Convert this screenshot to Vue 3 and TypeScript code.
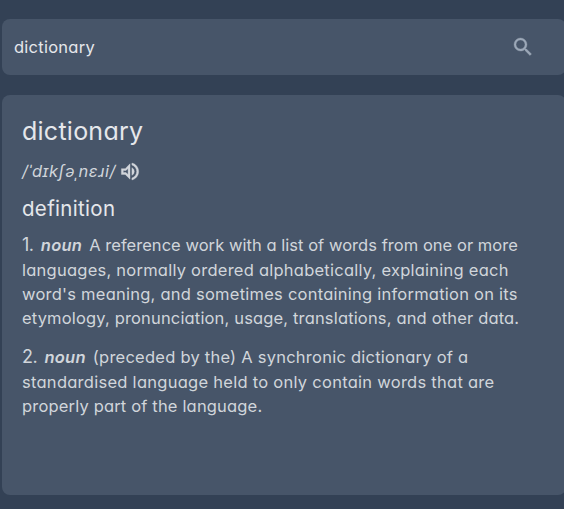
<script setup lang="ts">
import { ref } from 'vue'

interface Sense {
  id: number
  part: string
  lines: string[]
}

const query = ref('dictionary')
const word = 'dictionary'

const senses: Sense[] = [
  {
    id: 1,
    part: 'noun',
    lines: [
      'A reference work with a list of words from one or more',
      'languages, normally ordered alphabetically, explaining each',
      "word's meaning, and sometimes containing information on its",
      'etymology, pronunciation, usage, translations, and other data.',
    ],
  },
  {
    id: 2,
    part: 'noun',
    lines: [
      '(preceded by the) A synchronic dictionary of a',
      'standardised language held to only contain words that are',
      'properly part of the language.',
    ],
  },
]
</script>

<template>
  <main class="page">
    <form class="search" @submit.prevent>
      <input v-model="query" class="field" type="text" spellcheck="false" />
      <button class="icon-button" type="submit">
        <svg class="search-icon" viewBox="0 0 24 24">
          <path d="M15.5 14h-.79l-.28-.27A6.471 6.471 0 0 0 16 9.500 6.500 6.500 0 1 0 9.500 16c1.610 0 3.090-.59 4.230-1.570l.27.28v.79l5 4.990L20.490 19l-4.990-5zm-6 0C7.010 14 5 11.990 5 9.500S7.010 5 9.500 5 14 7.010 14 9.500 11.990 14 9.500 14z" />
        </svg>
      </button>
    </form>

    <article class="card">
      <h1 class="word"><span>{{ word }}</span></h1>
      <div class="phonetic">
        <span class="ipa">/ˈdɪkʃəˌnɛɹi/</span>
        <button class="icon-button" type="button">
          <svg class="speaker" viewBox="0 0 24 24">
            <path d="M3 9v6h4l5 5V4L7 9H3zm7-.17v6.340L7.830 13H5v-2h2.830L10 8.830zM16.500 12A4.500 4.500 0 0 0 14 7.970v8.050A4.470 4.470 0 0 0 16.500 12zM14 3.230v2.060c2.890.86 5 3.540 5 6.710s-2.110 5.850-5 6.710v2.060c4.010-.91 7-4.490 7-8.770s-2.990-7.860-7-8.770z" />
          </svg>
        </button>
      </div>
      <h2 class="heading"><span>definition</span></h2>
      <section v-for="sense in senses" :key="sense.id" class="sense" :class="`sense-${sense.id}`">
        <p v-for="(line, i) in sense.lines" :key="i" class="line" :class="`line-${i + 1}`">
          <template v-if="i === 0">
            <span class="number">{{ sense.id }}.</span>
            <em class="part">{{ sense.part }}</em>
          </template>
          <span class="text">{{ line }}</span>
        </p>
      </section>
    </article>
  </main>
</template>

<style>
body {
  margin: 0;
  overflow: hidden;
  background: #334155;
}
</style>

<style scoped>
.page {
  box-sizing: border-box;
  width: 566px;
  height: 509px;
  padding: 19px 0 14px 2px;
  display: flex;
  flex-direction: column;
  gap: 20px;
  background: #334155;
  color: #d1d5db;
  font-family: Inter, "Open Sans", sans-serif;
  font-feature-settings: "cv11";
}

.search {
  box-sizing: border-box;
  height: 56px;
  padding: 0 31px 0 12px;
  display: flex;
  align-items: center;
  border-radius: 8px;
  background: #475569;
}

.field {
  flex: 1;
  min-width: 0;
  padding: 0;
  border: 0;
  outline: 0;
  background: none;
  color: #e5e7eb;
  font: inherit;
  font-size: 16.5px;
  letter-spacing: 0.25px;
  font-feature-settings: "cv11";
}

.icon-button {
  display: flex;
  padding: 0;
  border: 0;
  background: none;
  color: inherit;
}

.search-icon {
  width: 24px;
  height: 24px;
  fill: #9ca8b8;
  stroke: #9ca8b8;
  stroke-width: 0.35;
}

.card {
  box-sizing: border-box;
  flex: 1;
  padding: 18px 20px;
  border-radius: 8px;
  background: #475569;
  white-space: nowrap;
}

.word,
.heading,
.line {
  margin: 0;
  font-weight: 400;
}

.word {
  height: 36px;
  line-height: 36px;
  font-size: 25px;
  letter-spacing: 0.25px;
  color: #e5e7eb;
}

.phonetic {
  height: 32px;
  margin-top: 6px;
  display: flex;
  align-items: center;
  gap: 2px;
}

.ipa {
  font-size: 16.5px;
  letter-spacing: 0.52px;
  font-style: italic;
}

.speaker {
  width: 24px;
  height: 23px;
  fill: #d1d5db;
  stroke: #d1d5db;
  stroke-width: 0.4;
}

.heading {
  margin-top: 7px;
  height: 30px;
  line-height: 30px;
  font-size: 20.5px;
  letter-spacing: 0.32px;
  color: #e5e7eb;
}

.sense {
  padding-top: 9px;
  font-size: 16.5px;
}

.sense + .sense {
  padding-top: 15px;
}

.line {
  height: 24px;
  line-height: 24px;
  display: flex;
  align-items: baseline;
  letter-spacing: 0.24px;
}

.line-1 {
  height: 25px;
}

.number {
  font-size: 18px;
  letter-spacing: -0.6px;
  margin-right: 7.500px;
}

.part {
  font-weight: 600;
  margin-right: 7px;
}

.sense-1 .line-1 .text {
  letter-spacing: 0.04px;
}

.sense-1 .line-4 {
  letter-spacing: 0.16px;
}

.sense-2 .line-2 {
  letter-spacing: 0.27px;
}

.sense-2 .line-3 {
  letter-spacing: 0.17px;
}
</style>
